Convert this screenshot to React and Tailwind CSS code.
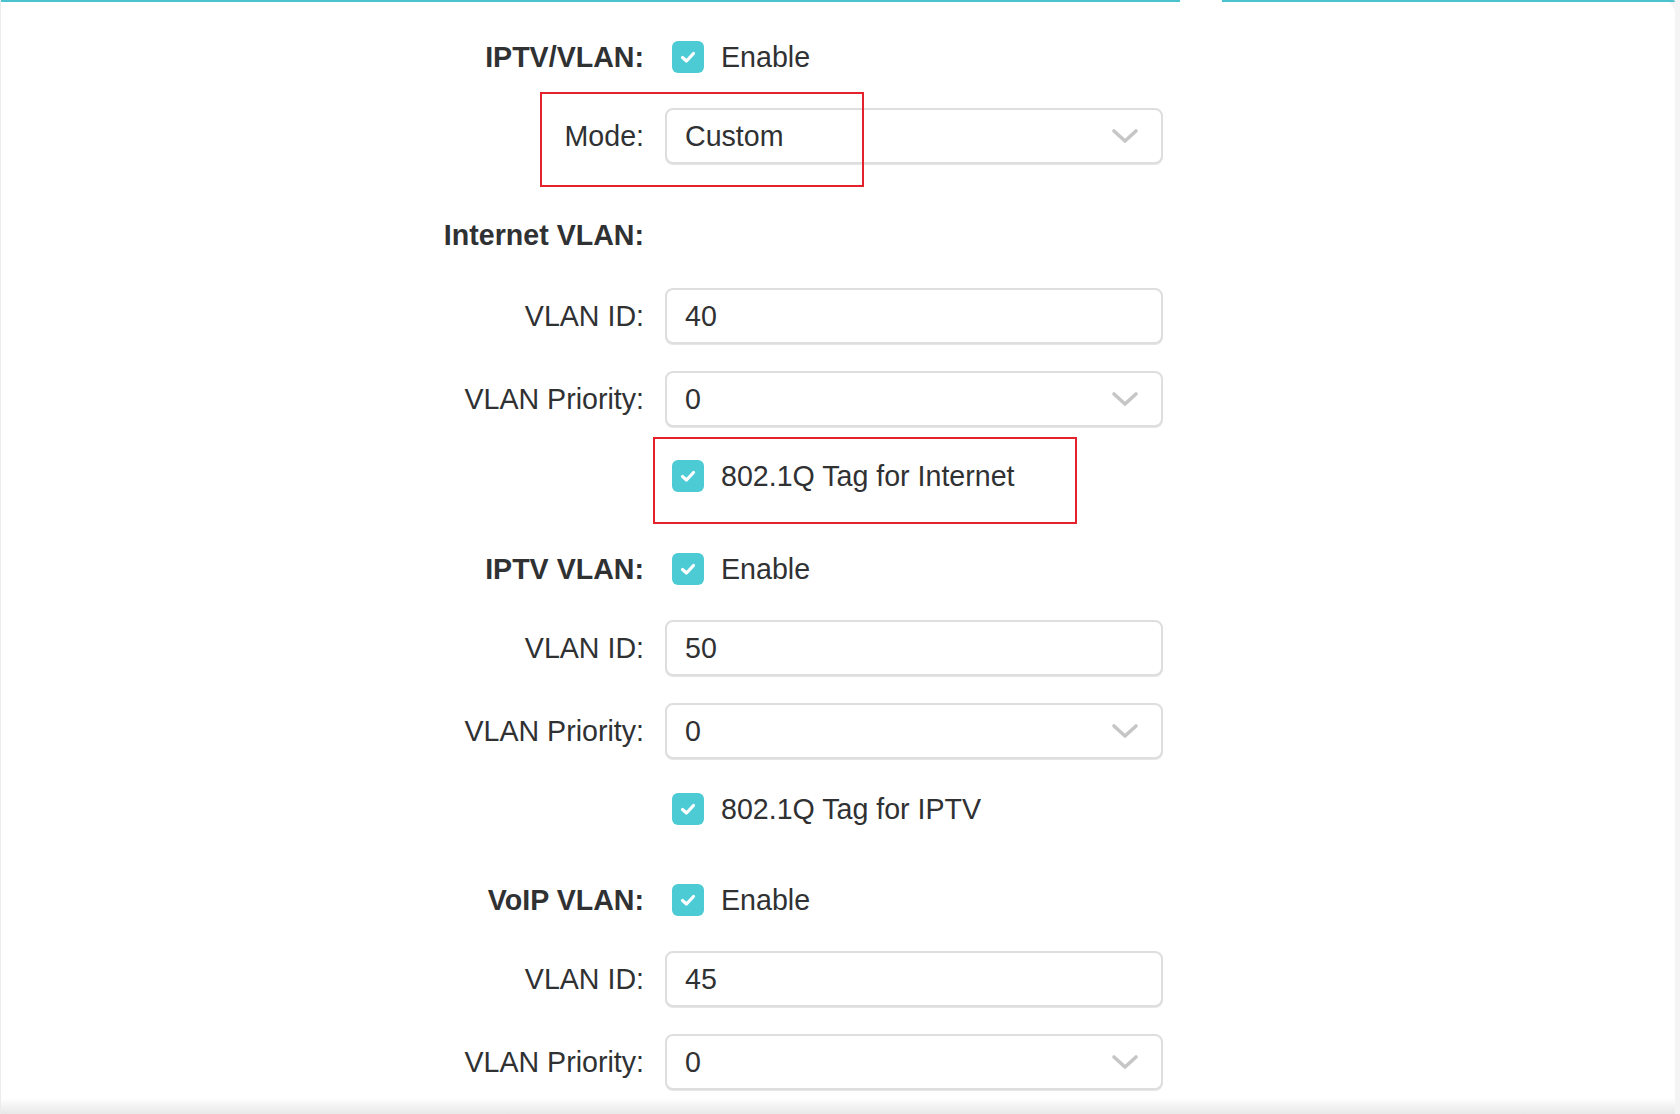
import React from 'react';

const Check = () => (
  <span className="flex h-[32px] w-[32px] shrink-0 items-center justify-center rounded-[6px] bg-[#4dcbd5]">
    <svg width="18" height="14" viewBox="0 0 18 14" fill="none">
      <path d="M3.5 7.5l4 3.5L14.5 3.5" stroke="#fff" strokeWidth="3.2" strokeLinecap="round" strokeLinejoin="round" />
    </svg>
  </span>
);

const Chevron = () => (
  <svg width="28" height="16" viewBox="0 0 28 16" fill="none">
    <path d="M3 3l11 10L25 3" stroke="#c6c6c6" strokeWidth="3.6" strokeLinecap="round" strokeLinejoin="round" />
  </svg>
);

const Row = ({ label, bold, className = '', children }) => (
  <div className={`flex items-center ${className}`}>
    <div className={`w-[643px] shrink-0 text-right ${bold ? 'font-bold' : ''}`}>{label}</div>
    <div className="ml-[21px] flex items-center">{children}</div>
  </div>
);

const Field = ({ value, select }) => (
  <div className="flex h-[56px] w-[498px] items-center justify-between rounded-[8px] border-2 border-[#dedede] bg-white pl-[18px] pr-[22px] shadow-[0_1px_0_#e6e6e6]">
    <span>{value}</span>
    {select && <Chevron />}
  </div>
);

const CheckRow = ({ text }) => (
  <div className="ml-[7px] flex items-center gap-[17px]">
    <Check />
    <span>{text}</span>
  </div>
);

export default function App() {
  return (
    <div
      className="relative h-[1114px] w-full overflow-hidden bg-[#f4f4f4] text-[28.6px] leading-none text-[#2f3133]"
      style={{ fontFamily: '"Liberation Sans", Arial, sans-serif' }}
    >
      <div className="flex h-full w-[1675px] flex-col rounded-tr-[14px] border-l border-[#ececec] bg-white">
        <div className="flex h-[2px] shrink-0">
          <div className="w-[1179px] bg-[#4ac3cf]" />
          <div className="w-[42px]" />
          <div className="flex-1 rounded-tr-[14px] bg-[#4ac3cf]" />
        </div>

        <div className="flex flex-1 flex-col">
          <Row label="IPTV/VLAN:" bold className="mt-[39px] h-[32px]">
            <CheckRow text="Enable" />
          </Row>
          <Row label="Mode:" className="mt-[35px]">
            <Field value="Custom" select />
          </Row>

          <Row label="Internet VLAN:" bold className="mt-[55px] h-[32px]" />
          <Row label="VLAN ID:" className="mt-[37px]">
            <Field value="40" />
          </Row>
          <Row label="VLAN Priority:" className="mt-[27px]">
            <Field value="0" select />
          </Row>
          <Row label="" className="mt-[33px] h-[32px]">
            <CheckRow text="802.1Q Tag for Internet" />
          </Row>

          <Row label="IPTV VLAN:" bold className="mt-[61px] h-[32px]">
            <CheckRow text="Enable" />
          </Row>
          <Row label="VLAN ID:" className="mt-[35px]">
            <Field value="50" />
          </Row>
          <Row label="VLAN Priority:" className="mt-[27px]">
            <Field value="0" select />
          </Row>
          <Row label="" className="mt-[34px] h-[32px]">
            <CheckRow text="802.1Q Tag for IPTV" />
          </Row>

          <Row label="VoIP VLAN:" bold className="mt-[59px] h-[32px]">
            <CheckRow text="Enable" />
          </Row>
          <Row label="VLAN ID:" className="mt-[35px]">
            <Field value="45" />
          </Row>
          <Row label="VLAN Priority:" className="mt-[27px]">
            <Field value="0" select />
          </Row>
        </div>

        <div className="h-[16px] shrink-0 bg-gradient-to-b from-white to-[#e8e8e8]" />
      </div>

      {/* annotation boxes */}
      <div className="absolute left-[540px] top-[92px] h-[95px] w-[324px] border-2 border-[#e5222b]" />
      <div className="absolute left-[653px] top-[437px] h-[87px] w-[424px] border-2 border-[#e5222b]" />
    </div>
  );
}
